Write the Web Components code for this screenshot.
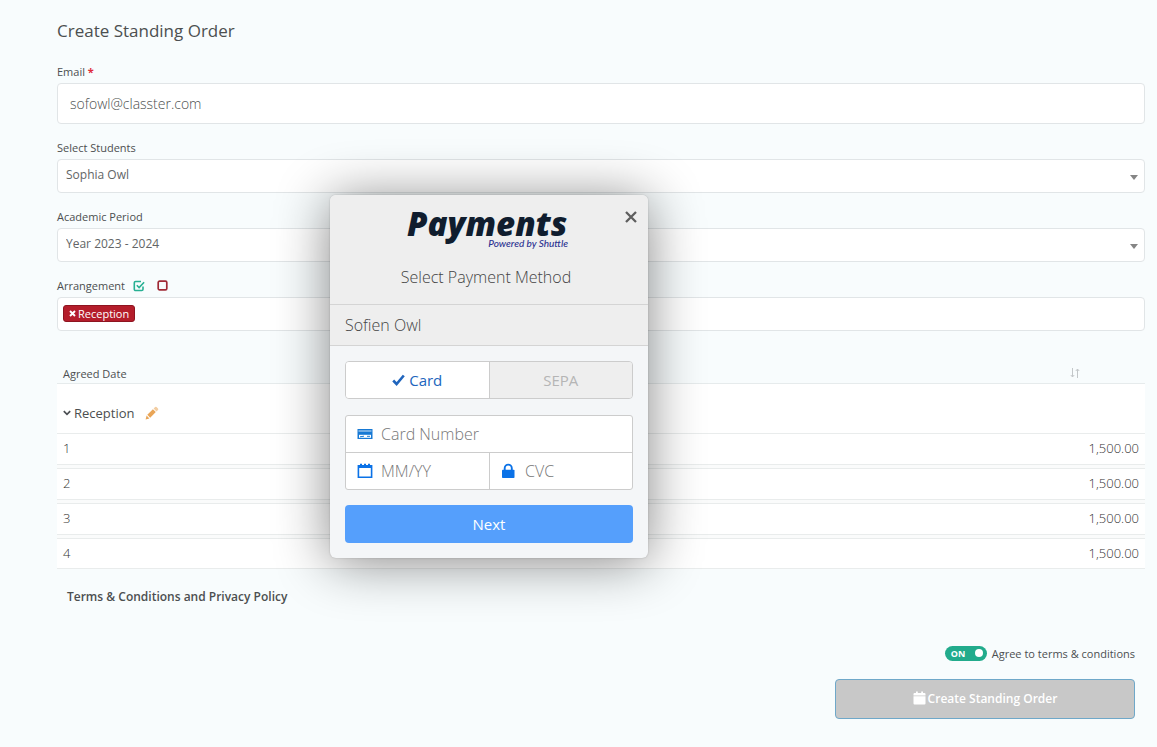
<!DOCTYPE html>
<html lang="en">
<head>
<meta charset="UTF-8">
<meta name="viewport" content="width=device-width, initial-scale=1">
<title>Create Standing Order</title>
<style>
  :root {
    --ink: #4c4f50;
    --soft: #626566;
    --line: #e1e5e7;
    --blue: #0b72e7;
  }

  body {
    margin: 0;
    background: #f8fcfd;
    color: var(--ink);
    font-family: "Open Sans", "Noto Sans", sans-serif;
    font-size: 13px;
  }
</style>
</head>
<body>
<standing-order-page>
  <text-field label="Email" value="sofowl@classter.com" required></text-field>
  <select-field label="Select Students" value="Sophia Owl"></select-field>
  <select-field label="Academic Period" value="Year 2023 - 2024"></select-field>
  <tag-field label="Arrangement" tag="Reception"></tag-field>
  <installment-table group="Reception" amounts="1,500.00|1,500.00|1,500.00|1,500.00"></installment-table>
  <terms-footer slot="footer"></terms-footer>
</standing-order-page>
<payment-dialog customer="Sofien Owl"></payment-dialog>

<script>
const fieldStyles = `
  :host { display: block; }
  * { box-sizing: border-box; }
  .label {
    display: flex;
    align-items: center;
    height: 15px;
    margin-bottom: 4px;
    font-size: 11px;
    font-weight: 500;
    white-space: pre;
  }
  .box {
    display: block;
    width: 100%;
    height: 34px;
    border: 1px solid var(--line);
    border-radius: 4px;
    background: #fff;
    color: var(--soft);
    font: 400 12px "Open Sans", sans-serif;
  }
`;

class StandingOrderPage extends HTMLElement {
  constructor() {
    super();
    this.attachShadow({ mode: "open" });
  }

  connectedCallback() {
    this.shadowRoot.innerHTML = `
      <style>
        :host { display: block; padding: 18px 12px 26px 57px; }
        h1 { margin: 0 0 20px; font-size: 17px; line-height: 26px; font-weight: 500; }
        .fields { display: flex; flex-direction: column; gap: 16px; }
      </style>
      <main>
        <h1>Create Standing Order</h1>
        <div class="fields"><slot></slot></div>
        <slot name="footer"></slot>
      </main>
    `;
  }
}

class TextField extends HTMLElement {
  constructor() {
    super();
    this.attachShadow({ mode: "open" });
  }

  connectedCallback() {
    const star = this.hasAttribute("required") ? `<span class="star"> *</span>` : "";
    this.shadowRoot.innerHTML = `
      <style>
        ${fieldStyles}
        .star { color: #e02b3c; font-weight: 700; }
        .box { height: 41px; padding: 0 12px; color: var(--ink); font-size: 14px; font-weight: 300; }
      </style>
      <label class="label" for="input">${this.getAttribute("label")}${star}</label>
      <input class="box" id="input" type="email" value="${this.getAttribute("value")}">
    `;
  }
}

class SelectField extends HTMLElement {
  constructor() {
    super();
    this.attachShadow({ mode: "open" });
  }

  connectedCallback() {
    this.shadowRoot.innerHTML = `
      <style>
        ${fieldStyles}
        .wrap { display: grid; align-items: center; }
        .wrap > * { grid-area: 1 / 1; }
        select.box { appearance: none; padding: 0 30px 3px 8px; }
        svg { justify-self: end; margin: 3px 7px 0 0; pointer-events: none; }
      </style>
      <label class="label" for="select">${this.getAttribute("label")}</label>
      <div class="wrap">
        <select class="box" id="select"><option>${this.getAttribute("value")}</option></select>
        <svg width="8" height="5" viewBox="0 0 8 5"><path d="M0 0h8L4 5z" fill="#858585"/></svg>
      </div>
    `;
  }
}

class TagField extends HTMLElement {
  constructor() {
    super();
    this.attachShadow({ mode: "open" });
  }

  connectedCallback() {
    this.shadowRoot.innerHTML = `
      <style>
        ${fieldStyles}
        button { border: 0; margin: 0; padding: 0; background: none; cursor: pointer; display: flex; }
        .all { margin-left: 8px; }
        .none { margin-left: 12px; }
        .box { display: flex; align-items: flex-start; padding: 7px 5px; }
        .tag {
          align-items: center;
          gap: 2px;
          height: 17px;
          padding: 0 5px;
          border: 1px solid #8e1420;
          border-radius: 3px;
          background: #b41d2b;
          color: #fff;
          font: 500 11px "Open Sans", sans-serif;
        }
      </style>
      <div class="label"><span id="name">${this.getAttribute("label")}</span><button class="all" aria-label="Select all"><svg width="12" height="12" viewBox="0 0 12 12" fill="none" stroke="#27b093" stroke-width="1.6"><path d="M10 6.5V9.2a1.3 1.3 0 0 1-1.3 1.3H2.6a1.3 1.3 0 0 1-1.3-1.3V2.8a1.3 1.3 0 0 1 1.3-1.3H8"/><path d="M3.8 5.2l2.3 2.3 5-5.2"/></svg></button><button class="none" aria-label="Clear all"><svg width="11" height="11" viewBox="0 0 11 11" fill="none" stroke="#a02a36" stroke-width="1.7"><rect x="1.2" y="1.2" width="8.6" height="8.6" rx="1.4"/></svg></button></div>
      <div class="box" role="group" aria-labelledby="name">
        <button class="tag"><svg width="7" height="7" viewBox="0 0 7 7" stroke="#fff" stroke-width="1.9"><path d="M1 1l5 5M6 1L1 6"/></svg>${this.getAttribute("tag")}</button>
      </div>
    `;
  }
}

class InstallmentTable extends HTMLElement {
  constructor() {
    super();
    this.attachShadow({ mode: "open" });
  }

  connectedCallback() {
    const rows = this.getAttribute("amounts").split("|").map((amount, i) => `
      <tr class="row"><td>${i + 1}</td><td class="amount">${amount}</td></tr>
    `).join("");

    this.shadowRoot.innerHTML = `
      <style>
        :host { display: block; margin-top: 17px; }
        table { width: 100%; border-spacing: 0; }
        th, td { box-sizing: border-box; padding: 0 6px; text-align: left; }
        th { height: 20px; font-size: 11px; font-weight: 500; border-bottom: 1px solid #e6ebec; }
        th.sort { text-align: right; padding: 0 65px 4px 0; }
        th svg { display: inline-block; vertical-align: middle; }
        .group td { height: 49px; padding-top: 8px; background: #fff; }
        .group div { display: flex; align-items: center; font-weight: 500; }
        .group button { display: flex; margin: 0 3px 0 0; padding: 0; border: 0; background: none; }
        .group .edit { margin: 0 0 0 10px; }
        .row td {
          height: 35px;
          padding-bottom: 6px;
          border-top: 1px solid #e9ecec;
          background: linear-gradient(to top, #fafbfb 3px, #e9ecec 3px 4px, #fff 4px);
          color: #333;
          font-weight: 300;
        }
        .row:last-child td { border-bottom: 1px solid #e9ecec; height: 31px; padding-bottom: 2px; background: #fff; }
        .row .amount { text-align: right; }
      </style>
      <table>
        <thead>
          <tr>
            <th>Agreed Date</th>
            <th class="sort"><svg width="10" height="10" viewBox="0 0 10 10" fill="none" stroke="#c3c7c9"><path d="M2.5 0v9M.8 7l1.7 2L4.2 7M7.5 10V1M5.8 3L7.5 1l1.7 2"/></svg></th>
          </tr>
        </thead>
        <tbody>
          <tr class="group"><td colspan="2"><div>
            <button aria-label="Collapse"><svg width="8" height="8" viewBox="0 0 8 8" fill="none" stroke="#4c4f53" stroke-width="1.7"><path d="M.8 2.2L4 5.4l3.2-3.2"/></svg></button>
            ${this.getAttribute("group")}
            <button class="edit" aria-label="Edit"><svg width="14" height="14" viewBox="0 0 14 14" fill="#e9a557"><path d="M.6 13.4l1-3.8 2.8 2.8zM2.3 8.8l5.6-5.6 2.9 2.9-5.6 5.6z"/><path d="M8.6 2.5l1.5-1.5q.7-.6 1.4 0l1.5 1.5q.6.7 0 1.4l-1.5 1.5z" fill="#f2cda2"/></svg></button>
          </div></td></tr>
          ${rows}
        </tbody>
      </table>
    `;
  }
}

class TermsFooter extends HTMLElement {
  constructor() {
    super();
    this.attachShadow({ mode: "open" });
  }

  connectedCallback() {
    this.shadowRoot.innerHTML = `
      <style>
        :host { display: block; padding: 0 10px; }
        h2 { margin: 18px 0 38px; font-size: 12px; line-height: 20px; font-weight: 600; }
        .actions { display: flex; flex-direction: column; align-items: flex-end; gap: 18px; }
        label { display: flex; align-items: center; gap: 5px; height: 16px; font-size: 11px; font-weight: 400; }
        .switch { display: grid; align-items: center; width: 42px; height: 15px; border-radius: 8px; background: #22ab8c; }
        .switch > * { grid-area: 1 / 1; }
        .switch span { padding-left: 6px; color: #fff; font-size: 9px; font-weight: 700; }
        input { appearance: none; width: 8px; height: 8px; margin: 0 4px 0 0; border-radius: 50%; background: #fff; justify-self: end; }
        .submit {
          display: flex;
          align-items: center;
          justify-content: center;
          gap: 2px;
          width: 300px;
          height: 40px;
          padding-bottom: 3px;
          border: 1px solid #6fa8c9;
          border-radius: 4px;
          background: #c8c8c8;
          color: #fff;
          font: 600 12px "Open Sans", sans-serif;
        }
      </style>
      <h2>Terms &amp; Conditions and Privacy Policy</h2>
      <div class="actions">
        <label><div class="switch"><span>ON</span><input type="checkbox" role="switch" checked></div>Agree to terms &amp; conditions</label>
        <button class="submit"><svg width="13" height="14" viewBox="0 0 13 14" fill="#fff"><path d="M1.5 2H3V.5h1.8V2h3.4V.5H10V2h1.5q1 0 1 1v1.6H.5V3q0-1 1-1zM.5 5.2h12v7.3q0 1-1 1h-10q-1 0-1-1z"/></svg>Create Standing Order</button>
      </div>
    `;
  }
}

class PaymentDialog extends HTMLElement {
  constructor() {
    super();
    this.attachShadow({ mode: "open" });
  }

  connectedCallback() {
    this.render();
    this.shadowRoot.querySelector(".close").addEventListener("click", () => this.remove());
  }

  render() {
    this.shadowRoot.innerHTML = `
      <style>
        :host {
          position: absolute;
          left: 330px;
          top: 195px;
          width: 318px;
          border-radius: 6px;
          background: #f4f6f8;
          box-shadow: 0 4px 54px rgba(0, 0, 0, 0.48), 0 0 2px rgba(0, 0, 0, 0.2);
          color: #444;
          font-family: "Open Sans", "Noto Sans", sans-serif;
          font-size: 16px;
          font-weight: 300;
        }
        * { box-sizing: border-box; }
        header {
          display: grid;
          justify-items: center;
          align-content: start;
          height: 110px;
          padding-top: 10px;
          border-bottom: 1px solid #d4d4d4;
          border-radius: 6px 6px 0 0;
          background: #eee;
        }
        .logo { grid-area: 1 / 1; display: block; overflow: visible; }
        .close { grid-area: 1 / 1; justify-self: end; align-self: start; display: flex; margin: 6px 11px 0 0; padding: 0; border: 0; background: none; }
        h2 { margin: 12px 0 0; padding-right: 6px; font-size: 16px; line-height: 24px; font-weight: 300; }
        .customer { height: 41px; padding: 0 15px; border-bottom: 1px solid #d4d4d4; background: #eee; line-height: 40px; }
        form { display: flex; flex-direction: column; gap: 15px; padding: 15px; }
        .tabs { display: flex; height: 38px; margin-bottom: 1px; border: 1px solid #ccc; border-radius: 4px; overflow: hidden; }
        .tabs button { flex: 1; display: flex; align-items: center; justify-content: center; gap: 4px; border: 0; background: #fff; color: #2065bd; font: 400 15px "Open Sans", sans-serif; }
        .tabs .off { border-left: 1px solid #ccc; background: #eee; color: #b5b5b5; }
        .card { display: grid; grid-template-columns: repeat(2, minmax(0, 1fr)); border: 1px solid #ccc; border-radius: 3px; background: #fff; }
        .cell { display: flex; align-items: center; gap: 8px; height: 36px; padding-left: 11px; }
        .cell.number { grid-column: 1 / 3; height: 37px; border-bottom: 1px solid #ccc; }
        .cell.cvc { border-left: 1px solid #ccc; }
        .cell svg { flex: none; }
        input { flex: 1; min-width: 0; padding: 0; border: 0; outline: 0; background: none; font: 300 16px "Open Sans", sans-serif; }
        input::placeholder { color: #777; }
        .next { height: 38px; border: 0; border-radius: 4px; background: #559ffc; color: #fff; font: 500 15px "Open Sans", sans-serif; }
      </style>
      <header>
        <svg class="logo" width="164" height="48" viewBox="0 0 164 48">
          <text x="0" y="31" font-family="Open Sans" font-size="33" font-weight="800" font-style="italic" fill="#101d2e">Payments</text>
          <text x="161" y="42" text-anchor="end" font-family="Lato" font-size="10" font-weight="500" font-style="italic" fill="#2b3191">Powered by Shuttle</text>
        </svg>
        <button class="close" aria-label="Close"><svg width="12" height="12" viewBox="0 0 12 12" stroke="#5e5e5e" stroke-width="2.3"><path d="M1 1l10 10M11 1L1 11"/></svg></button>
        <h2>Select Payment Method</h2>
      </header>
      <div class="customer">${this.getAttribute("customer")}</div>
      <form>
        <div class="tabs">
          <button type="button"><svg width="13" height="12" viewBox="0 0 13 12" fill="none" stroke="#2065bd" stroke-width="2.6"><path d="M1.2 6.5l3.4 3.5L11.8 1.5"/></svg>Card</button>
          <button type="button" class="off">SEPA</button>
        </div>
        <div class="card">
          <div class="cell number">
            <svg width="16" height="14" viewBox="0 0 16 14"><path d="M.5 2h15v10H.5z" fill="#1779d4"/><path d="M1.5 4h13" stroke="#fff" stroke-width=".8"/><path d="M2 7.8h12v3H2z" fill="#fff"/><path d="M3 9.8l4-.6M10 9.3h3" stroke="#1779d4"/></svg>
            <input aria-label="Card Number" placeholder="Card Number">
          </div>
          <div class="cell">
            <svg width="16" height="16" viewBox="0 0 16 16" fill="#0b72e7"><path fill-rule="evenodd" d="M.6 2H3V.8h2V2h2V.8h2V2h2V.8h2V2h2.4v13H.6zM2.2 5v8.4h11.6V5z"/></svg>
            <input aria-label="Expiry date" placeholder="MM/YY">
          </div>
          <div class="cell cvc">
            <svg width="16" height="16" viewBox="0 0 16 16"><rect x="1" y="6.8" width="12.5" height="8.2" rx=".8" fill="#0b72e7"/><path d="M3.7 8V5.2a3.55 3.55 0 0 1 7.1 0V8" fill="none" stroke="#0b72e7" stroke-width="1.9"/></svg>
            <input aria-label="CVC" placeholder="CVC">
          </div>
        </div>
        <button type="button" class="next">Next</button>
      </form>
    `;
  }
}

customElements.define("standing-order-page", StandingOrderPage);
customElements.define("text-field", TextField);
customElements.define("select-field", SelectField);
customElements.define("tag-field", TagField);
customElements.define("installment-table", InstallmentTable);
customElements.define("terms-footer", TermsFooter);
customElements.define("payment-dialog", PaymentDialog);
</script>
</body>
</html>
